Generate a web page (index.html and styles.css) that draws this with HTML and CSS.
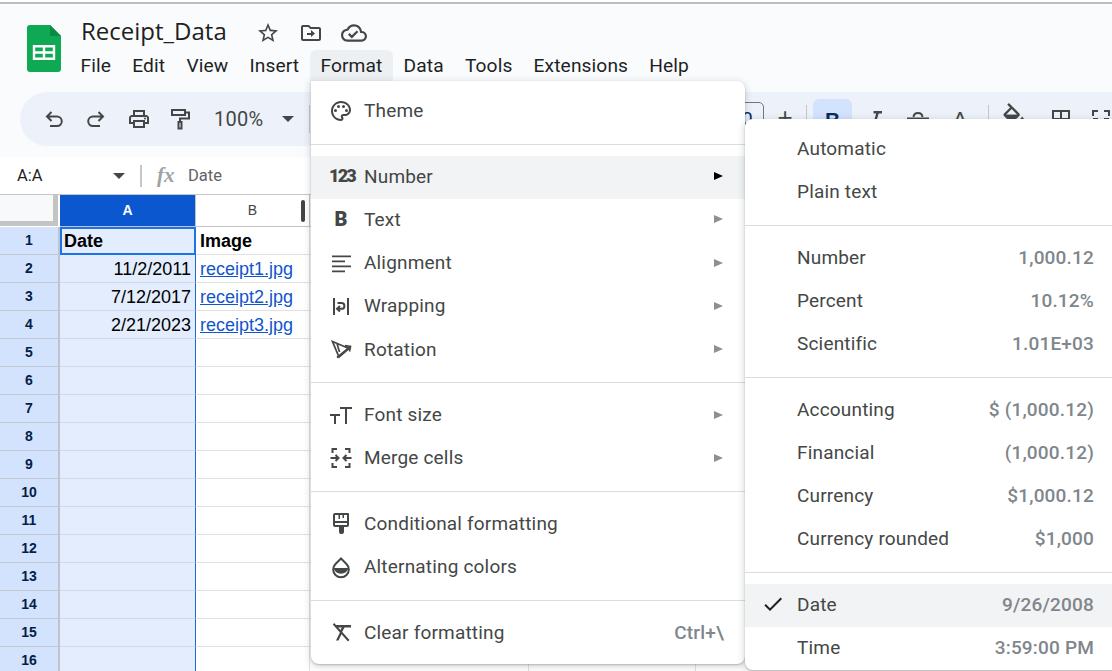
FILE: index.html
```html
<!DOCTYPE html>
<html lang="en">
<head>
<meta charset="utf-8">
<title>Receipt_Data</title>
<link rel="stylesheet" href="styles.css">
</head>
<body>
<div class="app">
  <div class="topline"></div>
  <header class="header">
    <div class="titlebar">
      <svg class="logo" viewBox="0 0 34 47"><path fill="#0fa853" d="M3 0H23L34 11V44a3 3 0 0 1-3 3H3a3 3 0 0 1-3-3V3a3 3 0 0 1 3-3z"/><path fill="#0a8a42" d="M23 0L34 11H23z"/><path fill="none" stroke="#fff" stroke-width="2.4" d="M7 21.2H27V33.8H7zM7 27.5H27M17 21.2V33.8"/></svg>
      <div class="titlecol">
        <div class="titlerow">
          <span class="doc-title">Receipt_Data</span>
          <svg class="ti star" viewBox="0 0 24 24"><path d="M22 9.24l-7.19-.62L12 2 9.19 8.63 2 9.24l5.46 4.73L5.82 21 12 17.27 18.18 21l-1.63-7.03L22 9.24zM12 15.4l-3.76 2.27 1-4.28-3.32-2.88 4.38-.38L12 6.1l1.71 4.04 4.38.38-3.32 2.88 1 4.28L12 15.4z"/></svg>
          <svg class="ti move" viewBox="0 0 24 24"><path d="M20 6h-8l-2-2H4c-1.1 0-2 .9-2 2v12c0 1.1.9 2 2 2h16c1.1 0 2-.9 2-2V8c0-1.1-.9-2-2-2zm0 12H4V6h5.17l2 2H20v10zm-8-4H8v-2h4V9l4 3.5-4 3.5v-2z"/></svg>
          <svg class="ti cloud" viewBox="0 0 24 24"><path d="M19.35 10.04C18.67 6.59 15.64 4 12 4 9.11 4 6.6 5.64 5.35 8.04 2.34 8.36 0 10.91 0 14c0 3.31 2.69 6 6 6h13c2.76 0 5-2.24 5-5 0-2.64-2.05-4.78-4.65-4.96zM19 18H6c-2.21 0-4-1.79-4-4 0-2.05 1.53-3.76 3.56-3.97l1.07-.11.5-.95C8.08 7.14 9.94 6 12 6c2.62 0 4.88 1.86 5.39 4.43l.3 1.5 1.53.11c1.56.1 2.78 1.41 2.78 2.96 0 1.65-1.35 3-3 3zm-9-3.82l-2.09-2.09L6.5 13.5 10 17l6.01-6.01-1.41-1.41z"/></svg>
        </div>
        <nav class="menubar">
          <span class="mb">File</span><span class="mb">Edit</span><span class="mb">View</span><span class="mb">Insert</span><span class="mb active">Format</span><span class="mb">Data</span><span class="mb">Tools</span><span class="mb">Extensions</span><span class="mb">Help</span>
        </nav>
      </div>
    </div>
    <div class="toolbar">
      <svg class="tb" viewBox="0 0 24 24"><path class="st" d="M9.5 5L5 9.5 9.5 14M5 9.5H15a4.8 4.8 0 0 1 0 9.6H8"/></svg>
      <svg class="tb" viewBox="0 0 24 24"><path class="st" d="M14.5 5L19 9.5 14.5 14M19 9.5H9a4.8 4.8 0 0 0 0 9.6H16"/></svg>
      <svg class="tb print" viewBox="0 0 24 24"><path d="M19 8h-1V3H6v5H5c-1.66 0-3 1.34-3 3v6h4v4h12v-4h4v-6c0-1.66-1.34-3-3-3zM8 5h8v3H8V5zm8 12v2H8v-4h8v2zm2-2v-2H6v2H4v-4c0-.55.45-1 1-1h14c.55 0 1 .45 1 1v4h-2z"/><circle cx="18" cy="11.5" r="1"/></svg>
      <svg class="tb paint" viewBox="0 0 24 24"><path class="st" d="M4 3H17V8H4zM17 5.5H21V11.5H12V15M10.500 15H13.500V21.500H10.500z"/></svg>
      <span class="zoomval">100%</span>
      <span class="caret"></span>
      <span class="tsep first"></span>
      <span class="sizebox">10</span>
      <span class="tglyph plus">+</span>
      <span class="tsep second"></span>
      <span class="boldbtn">B</span>
      <svg class="fmt ital" viewBox="0 0 24 24"><path d="M9.500 4v2.500h2.700l-3.400 11H6V20h8v-2.500h-2.700l3.400-11H18V4z"/></svg>
      <svg class="fmt strike" viewBox="0 0 24 24"><path class="st" d="M7.500 10C8 4.600 16 4.600 16.500 10M1 11.500H23"/></svg>
      <span class="tglyph acolor">A</span>
      <span class="tsep third"></span>
      <svg class="tb fill" viewBox="0 0 24 24"><path d="M16.560 8.940L7.620 0 6.210 1.410l2.380 2.380-5.150 5.150c-.59.59-.59 1.540 0 2.120l5.500 5.500c.29.29.68.44 1.060.44s.77-.15 1.060-.44l5.500-5.500c.59-.58.59-1.530 0-2.120zM5.210 10L10 5.210 14.790 10H5.210zM19 11.500s-2 2.170-2 3.500c0 1.100.9 2 2 2s2-.9 2-2c0-1.330-2-3.500-2-3.500z"/><path d="M4.500 10H15.500L10 16Z"/></svg>
      <svg class="tb borders" viewBox="0 0 24 24"><path class="st" d="M4 4H20V20H4zM4 12H20M12 4V20"/></svg>
      <svg class="tb merge" viewBox="0 0 24 24"><path class="st" d="M9 4H4V9M15 4H20V9M9 20H4V15M15 20H20V15M4 12H9M20 12H15"/></svg>
    </div>
  </header>
  <div class="formulabar">
    <span class="namebox">A:A</span>
    <span class="caret small"></span>
    <span class="fsep"></span>
    <span class="fx">fx</span>
    <span class="fval">Date</span>
  </div>
  <main class="sheet">
    <div class="row colheads">
      <div class="corner"><div class="corner-inner"></div></div>
      <div class="ch cha">A</div>
      <div class="ch chb">B<span class="handle"></span></div>
      <div class="ch chc"></div><div class="ch chd"></div><div class="ch che"></div>
    </div>
    <div class="row"><div class="rh">1</div><div class="cell a sel bold">Date</div><div class="cell b bold">Image</div><div class="cell c"></div><div class="cell d"></div><div class="cell e"></div></div>
    <div class="row"><div class="rh">2</div><div class="cell a num">11/2/2011</div><div class="cell b link">receipt1.jpg</div><div class="cell c"></div><div class="cell d"></div><div class="cell e"></div></div>
    <div class="row"><div class="rh">3</div><div class="cell a num">7/12/2017</div><div class="cell b link">receipt2.jpg</div><div class="cell c"></div><div class="cell d"></div><div class="cell e"></div></div>
    <div class="row"><div class="rh">4</div><div class="cell a num">2/21/2023</div><div class="cell b link">receipt3.jpg</div><div class="cell c"></div><div class="cell d"></div><div class="cell e"></div></div>
    <div class="row"><div class="rh">5</div><div class="cell a"></div><div class="cell b"></div><div class="cell c"></div><div class="cell d"></div><div class="cell e"></div></div>
    <div class="row"><div class="rh">6</div><div class="cell a"></div><div class="cell b"></div><div class="cell c"></div><div class="cell d"></div><div class="cell e"></div></div>
    <div class="row"><div class="rh">7</div><div class="cell a"></div><div class="cell b"></div><div class="cell c"></div><div class="cell d"></div><div class="cell e"></div></div>
    <div class="row"><div class="rh">8</div><div class="cell a"></div><div class="cell b"></div><div class="cell c"></div><div class="cell d"></div><div class="cell e"></div></div>
    <div class="row"><div class="rh">9</div><div class="cell a"></div><div class="cell b"></div><div class="cell c"></div><div class="cell d"></div><div class="cell e"></div></div>
    <div class="row"><div class="rh">10</div><div class="cell a"></div><div class="cell b"></div><div class="cell c"></div><div class="cell d"></div><div class="cell e"></div></div>
    <div class="row"><div class="rh">11</div><div class="cell a"></div><div class="cell b"></div><div class="cell c"></div><div class="cell d"></div><div class="cell e"></div></div>
    <div class="row"><div class="rh">12</div><div class="cell a"></div><div class="cell b"></div><div class="cell c"></div><div class="cell d"></div><div class="cell e"></div></div>
    <div class="row"><div class="rh">13</div><div class="cell a"></div><div class="cell b"></div><div class="cell c"></div><div class="cell d"></div><div class="cell e"></div></div>
    <div class="row"><div class="rh">14</div><div class="cell a"></div><div class="cell b"></div><div class="cell c"></div><div class="cell d"></div><div class="cell e"></div></div>
    <div class="row"><div class="rh">15</div><div class="cell a"></div><div class="cell b"></div><div class="cell c"></div><div class="cell d"></div><div class="cell e"></div></div>
    <div class="row"><div class="rh">16</div><div class="cell a"></div><div class="cell b"></div><div class="cell c"></div><div class="cell d"></div><div class="cell e"></div></div>
  </main>

  <div class="menu format-menu">
    <div class="mi"><svg class="mic" viewBox="0 0 24 24"><path d="M12 22C6.490 22 2 17.510 2 12S6.490 2 12 2s10 4.040 10 9c0 3.310-2.690 6-6 6h-1.770c-.28 0-.5.22-.5.5 0 .12.05.23.13.33.41.47.64 1.060.64 1.670 0 1.380-1.120 2.500-2.500 2.500zm0-18c-4.410 0-8 3.590-8 8s3.590 8 8 8c.28 0 .5-.22.5-.5 0-.16-.08-.28-.14-.35-.41-.46-.63-1.050-.63-1.650 0-1.380 1.120-2.500 2.500-2.500H16c2.210 0 4-1.790 4-4 0-3.860-3.590-7-8-7z"/><circle cx="6.500" cy="11.500" r="1.500"/><circle cx="9.500" cy="7.500" r="1.500"/><circle cx="14.500" cy="7.500" r="1.500"/><circle cx="17.500" cy="11.500" r="1.500"/></svg><span class="ml">Theme</span></div>
    <div class="msep"></div>
    <div class="mi hover"><span class="mic tx num123">123</span><span class="ml">Number</span><span class="arr dark"></span></div>
    <div class="mi"><span class="mic tx boldb">B</span><span class="ml">Text</span><span class="arr"></span></div>
    <div class="mi"><svg class="mic" viewBox="0 0 24 24"><path d="M3 4.500H22V6.300H3zM3 9.500H16V11.300H3zM3 14.500H22V16.300H3zM3 19.500H16V21.300H3z"/></svg><span class="ml">Alignment</span><span class="arr"></span></div>
    <div class="mi"><svg class="mic" viewBox="0 0 24 24"><path d="M4 4H6V21H4zM18 4H20V21H18z"/><path class="st" d="M8.500 9H12.500a2.900 2.900 0 0 1 0 5.800H8.500M11 12L8 14.800 11 17.600"/></svg><span class="ml">Wrapping</span><span class="arr"></span></div>
    <div class="mi"><svg class="mic" viewBox="0 0 24 24"><path class="st thin" d="M3.500 4.500L20 11.500 10 20ZM8 20.500L21.500 9.500M16 8.500L21.500 9.500 20.500 14.500M8 6.500L10.500 15"/></svg><span class="ml">Rotation</span><span class="arr"></span></div>
    <div class="msep"></div>
    <div class="mi"><svg class="mic" viewBox="0 0 24 24"><path d="M1 11H11V13H7V21H5V13H1zM11 4H23V6H18V21H16V6H11z"/></svg><span class="ml">Font size</span><span class="arr"></span></div>
    <div class="mi"><svg class="mic" viewBox="0 0 24 24"><path class="st" d="M8 3H3.500V7M16 3H20.500V7M8 21H3.500V17M16 21H20.500V17M1.500 12H9M6.500 9L9.500 12 6.500 15M22.500 12H15M17.500 9L14.500 12 17.500 15"/></svg><span class="ml">Merge cells</span><span class="arr"></span></div>
    <div class="msep"></div>
    <div class="mi"><svg class="mic" viewBox="0 0 24 24"><path d="M6 2H19a1 1 0 0 1 1 1V14a2 2 0 0 1-2 2H15V21a2 2 0 0 1-2 2H12a2 2 0 0 1-2-2V16H6a2 2 0 0 1-2-2V4a2 2 0 0 1 2-2zM6 4V10H18V4H15V7H13.500V4H11V8H9.500V4ZM6 12V14H18V12Z" fill-rule="evenodd"/></svg><span class="ml">Conditional formatting</span></div>
    <div class="mi"><svg class="mic" viewBox="0 0 24 24"><path class="st" d="M12 3.500L17.500 9A7.800 7.800 0 1 1 6.500 9Z"/><path d="M4.500 13H19.500A7.800 7.800 0 0 1 4.500 13Z"/></svg><span class="ml">Alternating colors</span></div>
    <div class="msep"></div>
    <div class="mi"><svg class="mic" viewBox="0 0 24 24"><path d="M7 5H22V7.500H15.500L13 12.300 11.200 10.500 12.800 7.500H9zM3.800 4.500L5.200 3 20.500 20 19 21.500 12.500 14.300 9.500 20.500H7L10.900 12.400z"/></svg><span class="ml">Clear formatting</span><span class="shortcut">Ctrl+\</span></div>
  </div>

  <div class="menu number-menu">
    <div class="mi sub"><span class="chk"></span><span class="ml">Automatic</span></div>
    <div class="mi sub"><span class="chk"></span><span class="ml">Plain text</span></div>
    <div class="msep"></div>
    <div class="mi sub"><span class="chk"></span><span class="ml">Number</span><span class="val">1,000.12</span></div>
    <div class="mi sub"><span class="chk"></span><span class="ml">Percent</span><span class="val">10.12%</span></div>
    <div class="mi sub"><span class="chk"></span><span class="ml">Scientific</span><span class="val">1.01E+03</span></div>
    <div class="msep"></div>
    <div class="mi sub"><span class="chk"></span><span class="ml">Accounting</span><span class="val">$ (1,000.12)</span></div>
    <div class="mi sub"><span class="chk"></span><span class="ml">Financial</span><span class="val">(1,000.12)</span></div>
    <div class="mi sub"><span class="chk"></span><span class="ml">Currency</span><span class="val">$1,000.12</span></div>
    <div class="mi sub"><span class="chk"></span><span class="ml">Currency rounded</span><span class="val">$1,000</span></div>
    <div class="msep"></div>
    <div class="mi sub hover"><span class="chk"><svg viewBox="0 0 24 24"><path d="M9 16.170L4.830 12l-1.420 1.410L9 19 21 7l-1.410-1.410z"/></svg></span><span class="ml">Date</span><span class="val">9/26/2008</span></div>
    <div class="mi sub"><span class="chk"></span><span class="ml">Time</span><span class="val">3:59:00 PM</span></div>
  </div>
</div>
</body>
</html>
```

FILE: styles.css
```css
* { box-sizing: border-box; }
html, body { margin: 0; padding: 0; height: 100%; overflow: hidden; background: #fff; }
.app { position: relative; width: 1112px; height: 671px; overflow: hidden; font-family: Roboto, "Liberation Sans", sans-serif; }
.topline { height: 4px; border-top: 2px solid #fff; border-bottom: 2px solid #bdbdbd; }

.header { height: 153px; background: #f9fbfd; overflow: hidden; }
.titlebar { display: flex; height: 88px; padding: 21px 0 0 27px; }
.logo { width: 34px; height: 47px; flex: none; }
.titlecol { margin-left: 9px; margin-top: -13px; }
.titlerow { display: flex; align-items: center; height: 36px; padding-left: 11px; }
.doc-title { font: 400 24px "Open Sans", sans-serif; color: #1f1f1f; width: 175px; white-space: nowrap; }
.ti { width: 24px; height: 24px; fill: #444746; flex: none; margin-top: 6px; }
.move { margin-left: 19px; }
.cloud { margin-left: 18px; width: 26px; height: 26px; }
.menubar { display: flex; margin-top: 2px; }
.mb { padding: 0 10.600px; height: 31px; line-height: 31px; font-size: 19.200px; color: #1f1f1f; border-radius: 6px 6px 0 0; letter-spacing: .1px; }
.mb.active { background: #edf0f3; }

.toolbar { display: flex; align-items: center; height: 54px; width: 1200px; margin-left: 20px; padding-left: 22px; background: #edf2fa; border-radius: 27px; }
.tb { width: 24px; height: 24px; flex: none; margin-right: 18px; fill: #444746; }
.tb.print { margin-left: 1px; margin-right: 17px; }
.st { fill: none; stroke: #444746; stroke-width: 2; }
.st.thin { stroke-width: 1.700; }
.zoomval { font-size: 20px; color: #444746; width: 62px; margin-left: 4px; letter-spacing: .3px; }
.caret { width: 0; height: 0; border-left: 6px solid transparent; border-right: 6px solid transparent; border-top: 6px solid #444746; margin-left: 6px; flex: none; }
.tsep { width: 1px; height: 28px; background: #c7c7c7; flex: none; }
.tsep.first { margin-left: 15px; }
.sizebox { width: 44px; height: 34px; margin-left: 410px; border: 1px solid #747775; border-radius: 5px; text-align: center; line-height: 32px; font-size: 19px; color: #0b2a5c; flex: none; }
.tglyph { font: 400 21px "Liberation Sans", sans-serif; color: #444746; flex: none; text-align: center; width: 42px; }
.plus { width: 42px; font-size: 26px; margin-bottom: 3px; }
.boldbtn { width: 39px; height: 40px; margin-left: 6px; margin-right: 3px; background: #d3e3fd; border-radius: 6px; text-align: center; font: 700 21px/42px "Liberation Sans", sans-serif; color: #0b2a5c; flex: none; }
.fmt { width: 24px; height: 24px; flex: none; margin: 0 9px; fill: #444746; }
.tsep.third { margin-left: 7px; }
.tb.fill { width: 28px; height: 28px; margin-left: 11px; margin-right: 21px; margin-bottom: 4px; }
.tb.borders { margin-right: 16px; }

.formulabar { display: flex; align-items: center; height: 38px; background: #fff; border-bottom: 1px solid #c4c7c5; padding-left: 17px; }
.namebox { font-size: 16.500px; color: #1f1f1f; width: 96px; }
.caret.small { margin-left: 0; }
.fsep { width: 2px; height: 22px; background: #c7c7c7; margin-left: 15px; }
.fx { font: italic 700 21px "Liberation Serif", serif; color: #a0a2a4; margin-left: 15px; width: 31px; }
.fval { font-size: 16.500px; color: #5f6368; }

.sheet { font-family: "Liberation Sans", Arial, sans-serif; }
.row { display: flex; height: 28px; }
.colheads { height: 32px; }
.corner { width: 60px; height: 32px; background: #fff; flex: none; }
.corner-inner { width: 58px; height: 31px; background: #f8f9fa; border-right: 5px solid #c4c4c4; border-bottom: 5px solid #c4c4c4; }
.ch { position: relative; height: 32px; text-align: center; line-height: 31px; font-size: 14px; color: #444; border-bottom: 1px solid #c4c4c4; border-right: 1px solid #c4c4c4; flex: none; }
.cha { width: 136px; background: #0b57d0; color: #fff; font-weight: 700; }
.chb { width: 114px; }
.chc { width: 219px; }
.chd { width: 167px; }
.che { width: 420px; }
.handle { position: absolute; left: 105px; top: 5px; width: 4px; height: 22px; background: #444; border-radius: 2px; }
.rh { width: 60px; flex: none; background: #d3e3fd; border-right: 2px solid #c0c4cc; border-bottom: 1px solid #c4c9d2; text-align: center; font-size: 14px; font-weight: 700; line-height: 27px; color: #041e49; }
.cell { flex: none; height: 28px; border-bottom: 1px solid #e1e1e1; border-right: 1px solid #e1e1e1; font-size: 18px; line-height: 29px; color: #000; padding: 0 4px; white-space: nowrap; overflow: hidden; }
.a { width: 136px; background: #e3edfd; border-bottom-color: #cfd8e6; border-right-color: #1f66cf; }
.b { width: 114px; }
.c { width: 219px; }
.d { width: 167px; }
.e { width: 420px; }
.sel { border: 2px solid #1a73e8; line-height: 25px; padding: 0 2px; }
.bold { font-weight: 700; }
.num { text-align: right; }
.link { color: #1155cc; text-decoration: underline; }

.menu { position: absolute; background: #fff; box-shadow: 0 2px 6px 2px rgba(60,64,67,.15), 0 1px 2px rgba(60,64,67,.3); }
.format-menu { left: 311px; top: 81px; width: 434px; padding: 9.200px 0 9px; border-radius: 0 8px 8px 8px; }
.number-menu { left: 745px; top: 119px; width: 380px; padding: 9px 0 0; border-radius: 8px 0 0 8px; }
.mi { display: flex; align-items: center; height: 43.200px; padding-left: 18px; padding-bottom: 2.200px; font-size: 19px; color: #444746; letter-spacing: .18px; }
.mi.hover { background: #f1f3f4; }
.mic { width: 24px; height: 24px; flex: none; fill: #444746; margin-right: 11px; }
.tx { display: block; text-align: left; color: #444746; }
.num123 { font: 900 18px/24px Roboto, sans-serif; letter-spacing: -1.800px; }
.boldb { font: 900 20px/24px Roboto, sans-serif; text-align: center; }
.ml { white-space: nowrap; }
.arr { margin-left: auto; margin-right: 22px; width: 0; height: 0; border-top: 4.500px solid transparent; border-bottom: 4.500px solid transparent; border-left: 9px solid #8f8f8f; }
.arr.dark { border-left-color: #000; }
.shortcut { margin-left: auto; margin-right: 21px; color: #80868b; font-weight: 500; }
.msep { height: 1px; margin: 10.700px 0; background: #dadce0; }
.mi.sub { padding-left: 16px; padding-right: 31px; }
.chk { width: 24px; height: 24px; margin-right: 12px; flex: none; fill: #1f1f1f; }
.chk svg { display: block; width: 24px; height: 24px; }
.val { margin-left: auto; color: #80868b; font-weight: 500; }
```
